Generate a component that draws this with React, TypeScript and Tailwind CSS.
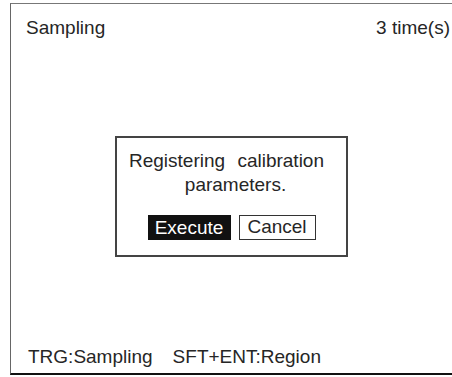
export default function App() {
  return (
    <div
      className="w-[452px] h-[377px] bg-white overflow-hidden pt-[3px] pl-[10px] text-[#262626]"
      style={{ fontFamily: '"Liberation Sans", Arial, sans-serif' }}
    >
      <div className="h-[372px] border-t border-l border-b-2 border-t-[#777] border-l-[#666] border-b-[#111] flex flex-col">
        {/* Header */}
        <div className="flex justify-between pt-[13px] pl-[15px] pr-[2px] text-[19px] leading-[22px]">
          <span>Sampling</span>
          <span>3 time(s)</span>
        </div>

        {/* Dialog */}
        <div className="mt-[97px] mx-auto w-[233px] h-[121px] border-2 border-[#444] flex flex-col items-center pt-[11px]">
          <div className="text-[19px] leading-[24px] text-center">
            <div className="pr-[10px] [word-spacing:7px]">Registering calibration</div>
            <div className="pl-[8px]">parameters.</div>
          </div>
          <div className="flex gap-[8px] mt-[18px] text-[19px] leading-[25px]">
            <div className="h-[25px] w-[83px] bg-[#111] text-white text-center">Execute</div>
            <div className="h-[25px] w-[77px] border-[1.5px] border-[#333] text-center leading-[22px]">Cancel</div>
          </div>
        </div>

        {/* Footer */}
        <div className="mt-auto flex gap-[20px] pl-[17px] pb-[5px] text-[19px] leading-[22px]">
          <span>TRG:Sampling</span>
          <span>SFT+ENT:Region</span>
        </div>
      </div>
    </div>
  )
}
